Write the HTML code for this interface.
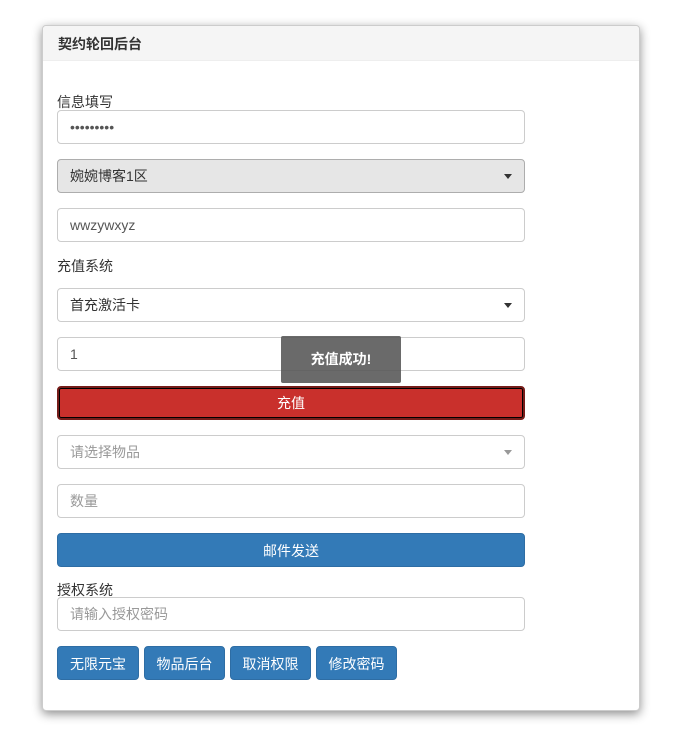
<!DOCTYPE html>
<html><head><meta charset="utf-8"><style>
body{margin:0;background:#fff;font-family:"Liberation Sans","Noto Sans CJK SC",sans-serif;font-size:14px;color:#333;}
.panel{position:absolute;left:42px;top:25px;width:596px;height:684px;border:1px solid #ccc;border-radius:4px;box-shadow:0 3px 10px rgba(0,0,0,.45);background:#fff;}
.hd{height:34px;background:#f5f5f5;border-bottom:1px solid #eee;font-weight:bold;line-height:36px;padding-left:15px;font-size:14px;border-radius:4px 4px 0 0}
.a{position:absolute;left:57px;height:32px;border:1px solid #ccc;border-radius:4px;box-sizing:content-box;line-height:32px;padding-left:12px;width:454px;background:#fff;color:#555}
.ph{color:#999}
.car:after{content:"";position:absolute;right:12px;top:14px;border-left:4px solid transparent;border-right:4px solid transparent;border-top:5px solid #333}
.lc:after{border-top-color:#999}
.lbl{position:absolute;left:57px;font-size:14px;color:#333}
.btn{position:absolute;height:34px;line-height:34px;text-align:center;color:#fff;background:#337ab7;border-radius:4px;border:1px solid #2e6da4;box-sizing:border-box}
</style></head><body>
<div class="panel"><div class="hd">契约轮回后台</div></div>
<div class="lbl" style="top:92px">信息填写</div>
<div class="a" style="top:110px">•••••••••</div>
<div class="a car" style="top:159px;background:#e6e6e6;border-color:#adadad;color:#333">婉婉博客1区</div>
<div class="a" style="top:208px">wwzywxyz</div>
<div class="lbl" style="top:256px">充值系统</div>
<div class="a car" style="top:288px;color:#333">首充激活卡</div>
<div class="a" style="top:337px">1</div>
<div class="btn" style="left:57px;top:386px;width:468px;background:#c9302c;border:2px solid #761c19;box-shadow:inset 0 0 0 1px #000;line-height:30px">充值</div>
<div class="a car lc ph" style="top:435px">请选择物品</div>
<div class="a ph" style="top:484px">数量</div>
<div class="btn" style="left:57px;top:533px;width:468px">邮件发送</div>
<div class="lbl" style="top:580px">授权系统</div>
<div class="a ph" style="top:597px">请输入授权密码</div>
<div class="btn" style="left:57px;top:646px;width:82px">无限元宝</div>
<div class="btn" style="left:144px;top:646px;width:81px">物品后台</div>
<div class="btn" style="left:230px;top:646px;width:81px">取消权限</div>
<div class="btn" style="left:316px;top:646px;width:81px">修改密码</div>
<div style="position:absolute;left:281px;top:336px;width:120px;height:47px;background:rgba(85,85,85,.88);border-radius:2px;color:#fff;text-align:center;line-height:47px;font-weight:bold;font-size:14px">充值成功!</div>
</body></html>
